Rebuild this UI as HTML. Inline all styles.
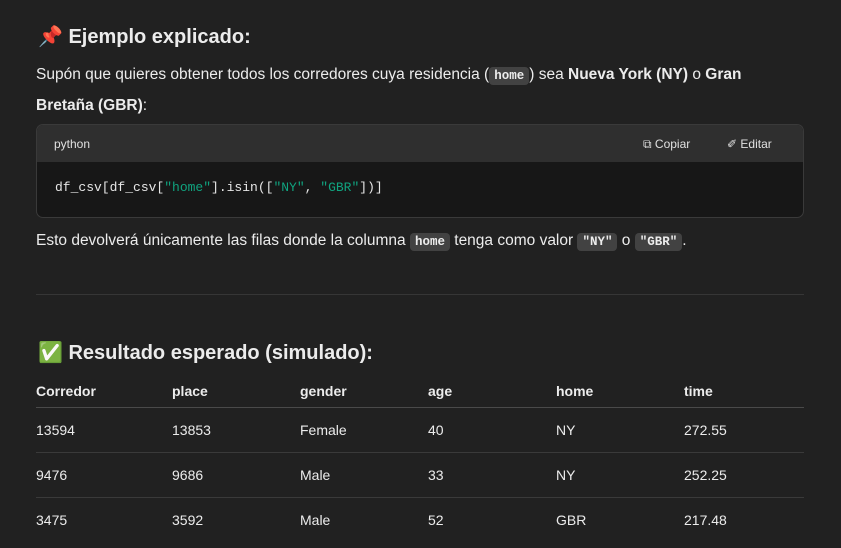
<!DOCTYPE html><html><head><meta charset="utf-8"><style>
body{margin:0;background:#212121;color:#ececec;font-family:"Liberation Sans",sans-serif;width:841px;height:548px;overflow:hidden;position:relative}
.a{position:absolute}
code{font-family:"Liberation Mono",monospace;font-size:12.5px;background:#424242;border-radius:4px;padding:2px 5px;font-weight:bold}
.cb{left:36px;top:124px;width:766px;height:92px;border:1px solid #3a3a3a;border-radius:7px;overflow:hidden;background:#171717}
.hd{height:37px;background:#2f2f2f;font-size:12px;color:#e0e0e0}
td,th{text-align:left;padding:0;width:128px;font-size:14px}
th{font-weight:bold;height:32px;border-bottom:1px solid #4a4a4a}
td{height:44px;border-bottom:1px solid #3a3a3a}
tr:last-child td{border-bottom:none}
</style></head><body>
<div class="a" style="left:38px;top:24px;font-size:20px;font-weight:bold">📌 Ejemplo explicado:</div>
<div class="a" style="left:36px;top:60px;width:760px;font-size:15.5px;line-height:29px">Supón que quieres obtener todos los corredores cuya residencia (<code>home</code>) sea <b>Nueva York (NY)</b> o <b>Gran Bretaña (GBR)</b>:</div>
<div class="a cb"><div class="hd"><span class="a" style="left:17px;top:12px">python</span><span class="a" style="left:606px;top:12px">⧉ Copiar</span><span class="a" style="left:690px;top:12px">✐ Editar</span></div>
<div class="a" style="left:18px;top:55px;font-family:'Liberation Mono',monospace;font-size:13px;color:#e6e6e6">df_csv[df_csv[<span style="color:#10a37f">"home"</span>].isin([<span style="color:#10a37f">"NY"</span>, <span style="color:#10a37f">"GBR"</span>])]</div></div>
<div class="a" style="left:36px;top:229px;font-size:15.5px;line-height:24px">Esto devolverá únicamente las filas donde la columna <code>home</code> tenga como valor <code>"NY"</code> o <code>"GBR"</code>.</div>
<div class="a" style="left:36px;top:294px;width:768px;height:1px;background:#363636"></div>
<div class="a" style="left:38px;top:340px;font-size:20px;font-weight:bold">✅ Resultado esperado (simulado):</div>
<table class="a" style="left:36px;top:375px;width:768px;border-collapse:collapse;table-layout:fixed">
<tr><th style="width:136px">Corredor</th><th style="width:128px">place</th><th style="width:128px">gender</th><th style="width:128px">age</th><th style="width:128px">home</th><th style="width:120px">time</th></tr>
<tr><td>13594</td><td>13853</td><td>Female</td><td>40</td><td>NY</td><td>272.55</td></tr>
<tr><td>9476</td><td>9686</td><td>Male</td><td>33</td><td>NY</td><td>252.25</td></tr>
<tr><td>3475</td><td>3592</td><td>Male</td><td>52</td><td>GBR</td><td>217.48</td></tr>
</table>
</body></html>
